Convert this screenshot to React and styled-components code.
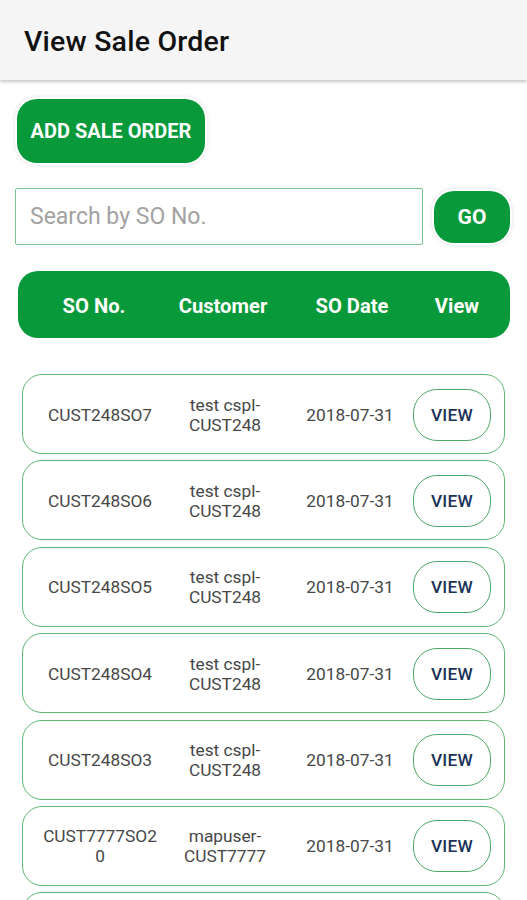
import React from "react";
import styled, { createGlobalStyle } from "styled-components";

const GREEN = "#08993b";

const Global = createGlobalStyle`
  html, body { margin: 0; padding: 0; background: #fff; }
  body { font-family: Roboto, "Noto Sans", sans-serif; }
  * { box-sizing: border-box; }
`;

const Page = styled.div`
  width: 527px;
  height: 900px;
  background: #fff;
  overflow: hidden;
`;

const AppBar = styled.header`
  height: 80px;
  background: #f5f5f5;
  display: flex;
  align-items: center;
  padding: 3px 0 0 24px;
  box-shadow: 0 2px 3px rgba(0, 0, 0, 0.22);
  position: relative;
  z-index: 1;
`;

const Title = styled.h1`
  margin: 0;
  font-size: 28.5px;
  font-weight: 500;
  color: #111;
  letter-spacing: 0.2px;
`;

const Content = styled.main`
  padding: 19px 17px 0 15px;
  display: flex;
  flex-direction: column;
`;

const PillButton = styled.button`
  border: none;
  background: ${GREEN};
  color: #fff;
  font-family: Roboto, sans-serif;
  font-weight: 700;
  font-size: ${(p) => p.$fs}px;
  border-radius: 20px;
  width: ${(p) => p.$w}px;
  height: ${(p) => p.$h}px;
  box-shadow: 0 0 0 2px #fff, 0 0 4px 2px rgba(0, 0, 0, 0.12);
  padding: 0;
  flex-shrink: 0;
`;

const AddButton = styled(PillButton)`
  margin-left: 2px;
  align-self: flex-start;
`;

const SearchRow = styled.div`
  margin-top: 25px;
  display: flex;
  align-items: center;
  gap: 11px;
`;

const SearchInput = styled.input`
  width: 408px;
  height: 57px;
  border: 1.5px solid #7cc38d;
  border-radius: 2px;
  padding: 0 14px;
  font-family: Roboto, sans-serif;
  font-size: 23px;
  color: #333;
  outline: none;
  &::placeholder { color: #a2a2a2; }
`;

const HeadBar = styled.div`
  margin-top: 26px;
  margin-left: 3px;
  width: 492px;
  height: 67px;
  background: ${GREEN};
  border-radius: 20px;
  display: grid;
  grid-template-columns: 128px 130px 128px 1fr;
  align-items: center;
  padding: 2px 12px 0;
`;

const HeadCell = styled.div`
  color: #fff;
  font-weight: 700;
  font-size: 20.2px;
  text-align: center;
`;

const List = styled.div`
  margin-top: 36px;
  margin-left: 7px;
  display: flex;
  flex-direction: column;
  gap: 6.4px;
`;

const Card = styled.div`
  width: 483px;
  height: 80px;
  border: 1.5px solid #5fb673;
  border-radius: 20px;
  display: grid;
  grid-template-columns: 120px 130px 120px 1fr;
  align-items: center;
  padding: 1px 13px 0 17px;
  flex-shrink: 0;
`;

const Cell = styled.div`
  text-align: center;
  color: #474747;
  font-size: 17.3px;
  line-height: 20px;
  word-break: ${(p) => (p.$breakAll ? "break-all" : "normal")};
`;

const ViewButton = styled.button`
  justify-self: end;
  width: 78px;
  height: 52px;
  border-radius: 24px;
  border: 1.5px solid #4ea866;
  background: #fff;
  color: #1b3356;
  font-family: Roboto, sans-serif;
  font-weight: 500;
  font-size: 17.3px;
  letter-spacing: 0.3px;
  padding: 0;
`;

const rows = [
  ["CUST248SO7", "test cspl-CUST248", "2018-07-31"],
  ["CUST248SO6", "test cspl-CUST248", "2018-07-31"],
  ["CUST248SO5", "test cspl-CUST248", "2018-07-31"],
  ["CUST248SO4", "test cspl-CUST248", "2018-07-31"],
  ["CUST248SO3", "test cspl-CUST248", "2018-07-31"],
  ["CUST7777SO20", "mapuser-CUST7777", "2018-07-31"],
  ["CUST7777SO19", "mapuser-CUST7777", "2018-07-31"],
];

export default function App() {
  return (
    <Page>
      <Global />
      <AppBar>
        <Title>View Sale Order</Title>
      </AppBar>
      <Content>
        <AddButton $w={188} $h={64} $fs={20}>ADD SALE ORDER</AddButton>
        <SearchRow>
          <SearchInput placeholder="Search by SO No." />
          <PillButton $w={76} $h={52} $fs={21}>GO</PillButton>
        </SearchRow>
        <HeadBar>
          <HeadCell>SO No.</HeadCell>
          <HeadCell>Customer</HeadCell>
          <HeadCell>SO Date</HeadCell>
          <HeadCell>View</HeadCell>
        </HeadBar>
        <List>
          {rows.map((r, i) => (
            <Card key={i}>
              <Cell $breakAll>{r[0]}</Cell>
              <Cell>{r[1]}</Cell>
              <Cell>{r[2]}</Cell>
              <ViewButton>VIEW</ViewButton>
            </Card>
          ))}
        </List>
      </Content>
    </Page>
  );
}
